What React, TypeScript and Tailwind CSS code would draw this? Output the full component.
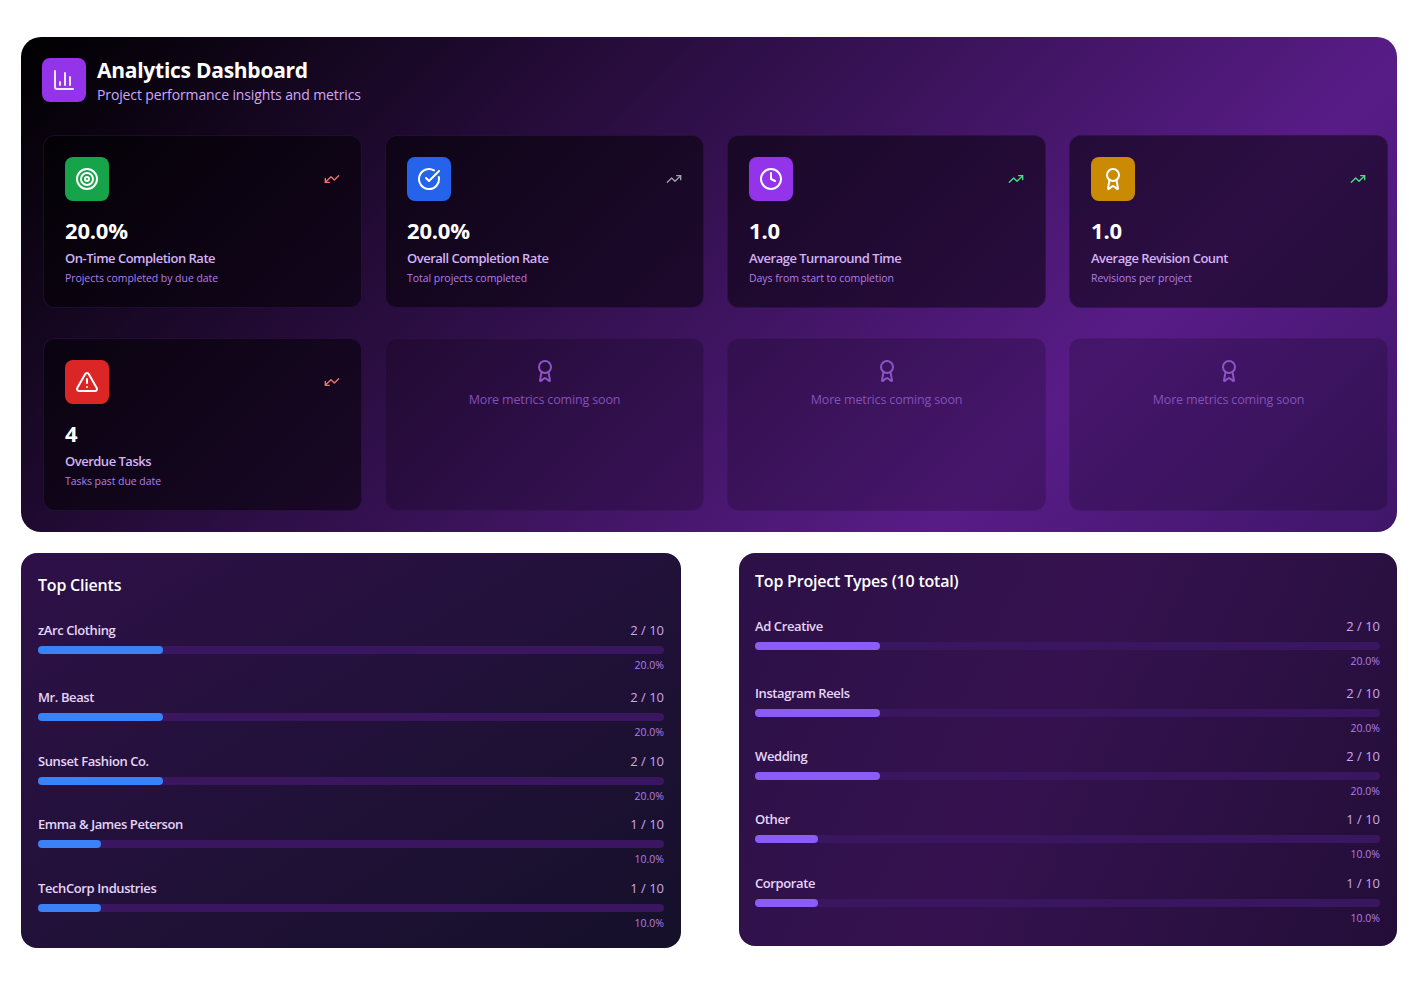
import { Award, ChartColumn, CircleCheckBig, Clock, Target, TrendingUp, TriangleAlert } from "lucide-react";

type Metric = {
  icon: typeof Award;
  iconBg: string;
  trend: string;
  value: string;
  label: string;
  desc: string;
};

const metrics: Metric[] = [
  { icon: Target, iconBg: "bg-[#16a34a]", trend: "text-[#f87171] rotate-180", value: "20.0%", label: "On-Time Completion Rate", desc: "Projects completed by due date" },
  { icon: CircleCheckBig, iconBg: "bg-[#2563eb]", trend: "text-[#9ca3af]", value: "20.0%", label: "Overall Completion Rate", desc: "Total projects completed" },
  { icon: Clock, iconBg: "bg-[#9333ea]", trend: "text-[#4ade80]", value: "1.0", label: "Average Turnaround Time", desc: "Days from start to completion" },
  { icon: Award, iconBg: "bg-[#ca8a04]", trend: "text-[#4ade80]", value: "1.0", label: "Average Revision Count", desc: "Revisions per project" },
];

const clients = [
  { name: "zArc Clothing", count: 2, gap: "" },
  { name: "Mr. Beast", count: 2, gap: "mt-[17px]" },
  { name: "Sunset Fashion Co.", count: 2, gap: "mt-[14px]" },
  { name: "Emma & James Peterson", count: 1, gap: "mt-[13px]" },
  { name: "TechCorp Industries", count: 1, gap: "mt-[14px]" },
];

const projectTypes = [
  { name: "Ad Creative", count: 2, gap: "" },
  { name: "Instagram Reels", count: 2, gap: "mt-[17px]" },
  { name: "Wedding", count: 2, gap: "mt-[13px]" },
  { name: "Other", count: 1, gap: "mt-[13px]" },
  { name: "Corporate", count: 1, gap: "mt-[14px]" },
];

function MetricCard({ m }: { m: Metric }) {
  const Icon = m.icon;
  return (
    <div className="h-[173px] rounded-xl border border-[#581c87]/30 bg-black/50 p-[21px]">
      <div className="flex items-center justify-between">
        <div className={`flex h-[44px] w-[44px] items-center justify-center rounded-lg ${m.iconBg}`}>
          <Icon className="h-6 w-6 text-white" strokeWidth={2} />
        </div>
        <TrendingUp className={`h-4 w-4 ${m.trend}`} />
      </div>
      <div className="mt-[13px] text-[22px] leading-[32px] font-bold tracking-[-0.2px] text-white">{m.value}</div>
      <div className="mt-[2px] text-[13px] leading-[20px] font-semibold tracking-[-0.5px] text-[#d3b2f5]">{m.label}</div>
      <div className="mt-[1px] text-[10.5px] leading-[18px] tracking-[-0.05px] text-[#b07fe6]">{m.desc}</div>
    </div>
  );
}

function SoonCard() {
  return (
    <div className="flex h-[173px] flex-col items-center rounded-xl border border-[#581c87]/20 bg-black/20 pt-[20px]">
      <Award className="h-6 w-6 text-[#8b55c4]" strokeWidth={2} />
      <div className="mt-[7px] text-[12.5px] leading-[20px] tracking-[-0.15px] text-[#8450bb]">More metrics coming soon</div>
    </div>
  );
}

function Rows({ rows, color }: { rows: typeof clients; color: string }) {
  return (
    <div>
      {rows.map((r) => (
        <div key={r.name} className={r.gap}>
          <div className="flex items-center justify-between text-[13px] leading-[20px]">
            <span className="font-semibold tracking-[-0.4px] text-[#e5d5f8]">{r.name}</span>
            <span className="text-[#c9a8ec]">{r.count} / 10</span>
          </div>
          <div className="mt-[6px] h-[8px] w-full rounded-full bg-[#3a1660]">
            <div className={`h-full rounded-full ${color}`} style={{ width: `${r.count * 10}%` }} />
          </div>
          <div className="mt-[3px] -mb-[3px] text-right text-[10.5px] leading-[16px] text-[#b07fe6]">{(r.count * 10).toFixed(1)}%</div>
        </div>
      ))}
    </div>
  );
}

export default function App() {
  return (
    <div className="min-h-[983px] bg-white pt-[37px] pl-[21px] font-['Open_Sans',sans-serif]">
      <div className="h-[495px] w-[1376px] rounded-[20px] bg-[linear-gradient(135deg,#000_0%,#581c87_75%,#3f1669_100%)] pt-[21px] pl-[21px]">
        <div className="flex h-[44px] items-center gap-[11px]">
          <div className="flex h-[44px] w-[44px] items-center justify-center rounded-lg bg-[#9333ea]">
            <ChartColumn className="h-6 w-6 text-[#f3e8ff]" />
          </div>
          <div>
            <h1 className="text-[21px] leading-[28px] font-bold tracking-[-0.26px] text-white">Analytics Dashboard</h1>
            <p className="mt-[1px] text-[14px] leading-[20px] tracking-[-0.12px] text-[#d0a8fa]">Project performance insights and metrics</p>
          </div>
        </div>
        <div className="mt-[33px] ml-[1px] grid w-[1345px] grid-cols-4 gap-x-[23px] gap-y-[30px]">
          {metrics.map((m) => (
            <MetricCard key={m.label} m={m} />
          ))}
          <MetricCard m={{ icon: TriangleAlert, iconBg: "bg-[#dc2626]", trend: "text-[#f87171] rotate-180", value: "4", label: "Overdue Tasks", desc: "Tasks past due date" }} />
          <SoonCard />
          <SoonCard />
          <SoonCard />
        </div>
      </div>
      <div className="mt-[21px] flex items-start gap-[58px]">
        <div className="h-[395px] w-[660px] rounded-[16px] bg-gradient-to-br from-[#2e1048] to-[#15102a] px-[17px] pt-[20px]">
          <h2 className="-mt-[1px] text-[16px] leading-[26px] font-semibold tracking-[-0.2px] text-white">Top Clients</h2>
          <div className="mt-[22px]">
            <Rows rows={clients} color="bg-[#3b82f6]" />
          </div>
        </div>
        <div className="h-[393px] w-[658px] rounded-[16px] bg-[linear-gradient(115deg,#2c1046_0%,#35124f_45%,#230e38_100%)] pt-[16px] pr-[17px] pl-[16px]">
          <h2 className="-mt-[1px] text-[16px] leading-[26px] font-semibold tracking-[-0.2px] text-white">Top Project Types (10 total)</h2>
          <div className="mt-[22px]">
            <Rows rows={projectTypes} color="bg-[#8b5cf6]" />
          </div>
        </div>
      </div>
    </div>
  );
}
